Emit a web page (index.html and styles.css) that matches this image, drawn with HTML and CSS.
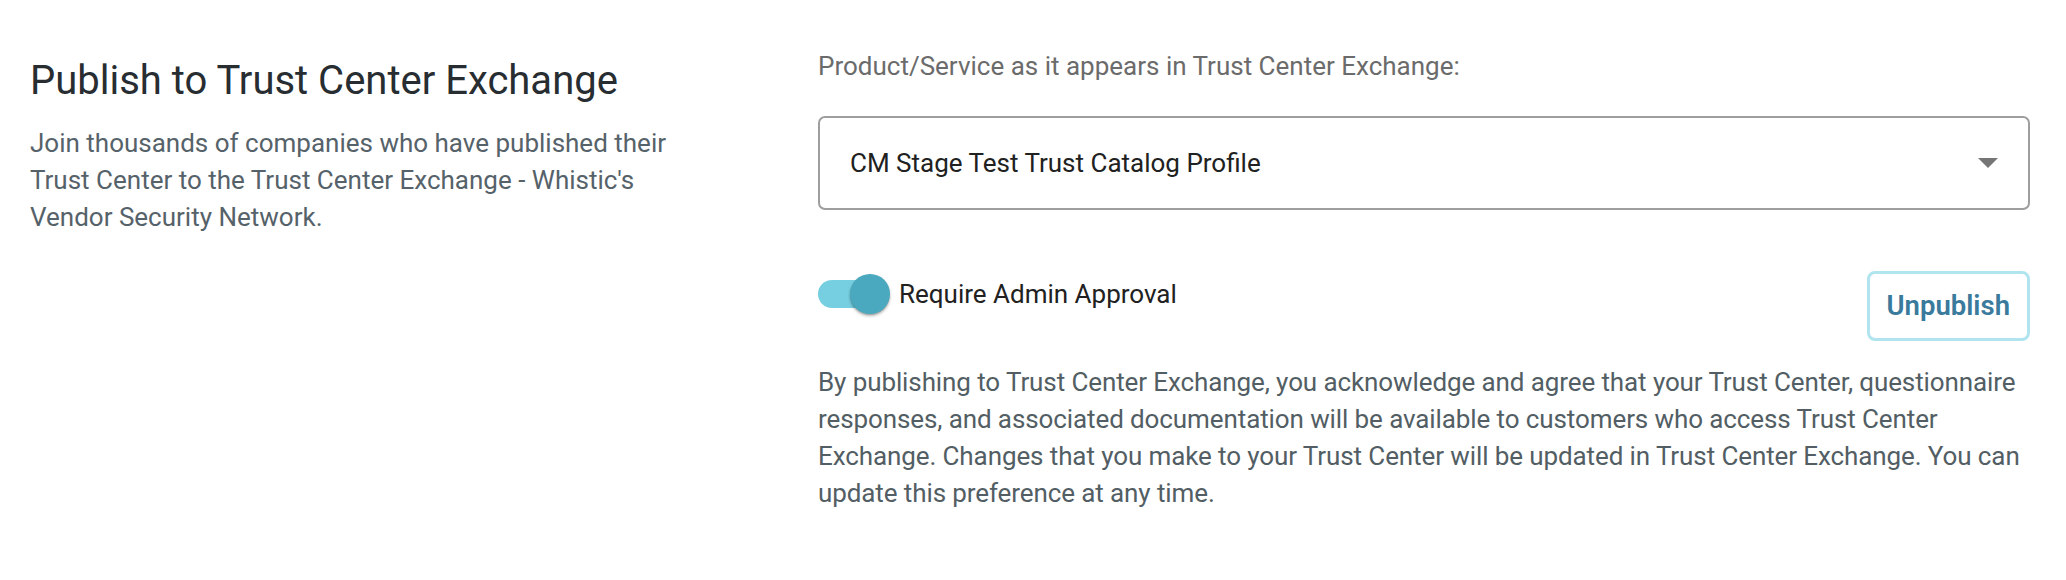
FILE: index.html
```html
<!DOCTYPE html>
<html lang="en">
<head>
<meta charset="utf-8">
<title>Publish to Trust Center Exchange</title>
<link rel="stylesheet" href="styles.css">
</head>
<body>
<main class="page">
  <section class="intro">
    <h1 class="title">Publish to Trust Center Exchange</h1>
    <p class="desc">Join thousands of companies who have published their Trust Center to the Trust Center Exchange - Whistic's Vendor Security Network.</p>
  </section>
  <section class="settings">
    <label class="field-label">Product/Service as it appears in Trust Center Exchange:</label>
    <div class="select">
      <span class="select-value">CM Stage Test Trust Catalog Profile</span>
      <svg class="select-arrow" width="20" height="10" viewBox="0 0 20 10"><path d="M0 0 L20 0 L10 10 Z" fill="#757575"/></svg>
    </div>
    <div class="toggle-row">
      <div class="toggle-group">
        <span class="switch"><span class="switch-track"></span><span class="switch-thumb"></span></span>
        <span class="switch-label">Require Admin Approval</span>
      </div>
      <button class="btn-outline">Unpublish</button>
    </div>
    <p class="notice">By publishing to Trust Center Exchange, you acknowledge and agree that your Trust Center, questionnaire responses, and associated documentation will be available to customers who access Trust Center Exchange. Changes that you make to your Trust Center will be updated in Trust Center Exchange. You can update this preference at any time.</p>
  </section>
</main>
</body>
</html>
```

FILE: styles.css
```css
* { box-sizing: border-box; }
html, body { margin: 0; padding: 0; background: #ffffff; }
body {
  font-family: Roboto, "Liberation Sans", Arial, sans-serif;
  font-size: 26px;
  line-height: 37px;
  color: #212121;
}
.page {
  display: grid;
  grid-template-columns: 788px 1fr;
  padding: 48px 36px 0 30px;
}
.intro { display: flex; flex-direction: column; }
.title {
  margin: 9px 0 0 0;
  font-size: 40px;
  line-height: 48px;
  font-weight: 400;
  color: #272d31;
}
.desc {
  margin: 20px 0 0 0;
  max-width: 660px;
  color: #56626a;
}
.settings { display: flex; flex-direction: column; }
.field-label { display: block; color: #6b6b6b; }
.select {
  margin-top: 31px;
  height: 94px;
  border: 2px solid #9e9e9e;
  border-radius: 7px;
  display: flex;
  align-items: center;
  justify-content: space-between;
  padding: 0 30px 0 30px;
}
.select-value { color: #212121; }
.select-arrow { display: block; }
.toggle-row {
  margin-top: 61px;
  display: flex;
  justify-content: space-between;
  align-items: flex-start;
}
.toggle-group {
  margin-top: 3px;
  display: flex;
  align-items: center;
  gap: 9px;
}
.switch {
  position: relative;
  display: block;
  width: 72px;
  height: 40px;
}
.switch-track {
  position: absolute;
  left: 0;
  top: 6px;
  width: 66px;
  height: 28px;
  border-radius: 14px;
  background: #76cfe0;
}
.switch-thumb {
  position: absolute;
  left: 32px;
  top: 0;
  width: 40px;
  height: 40px;
  border-radius: 50%;
  background: #4ba9bf;
  box-shadow: 0 2px 3px rgba(0,0,0,0.28), 0 1px 1px rgba(0,0,0,0.14);
}
.switch-label { color: #212121; line-height: 37px; }
.btn-outline {
  font-family: Roboto, "Liberation Sans", Arial, sans-serif;
  font-size: 27.5px;
  font-weight: 600;
  line-height: 32px;
  color: #3a7a9c;
  background: #ffffff;
  border: 3px solid #b0e4ee;
  border-radius: 8px;
  padding: 16px 17px;
}
.notice {
  margin: 23px 0 0 0;
  color: #525e64;
  letter-spacing: -0.1px;
}
```
